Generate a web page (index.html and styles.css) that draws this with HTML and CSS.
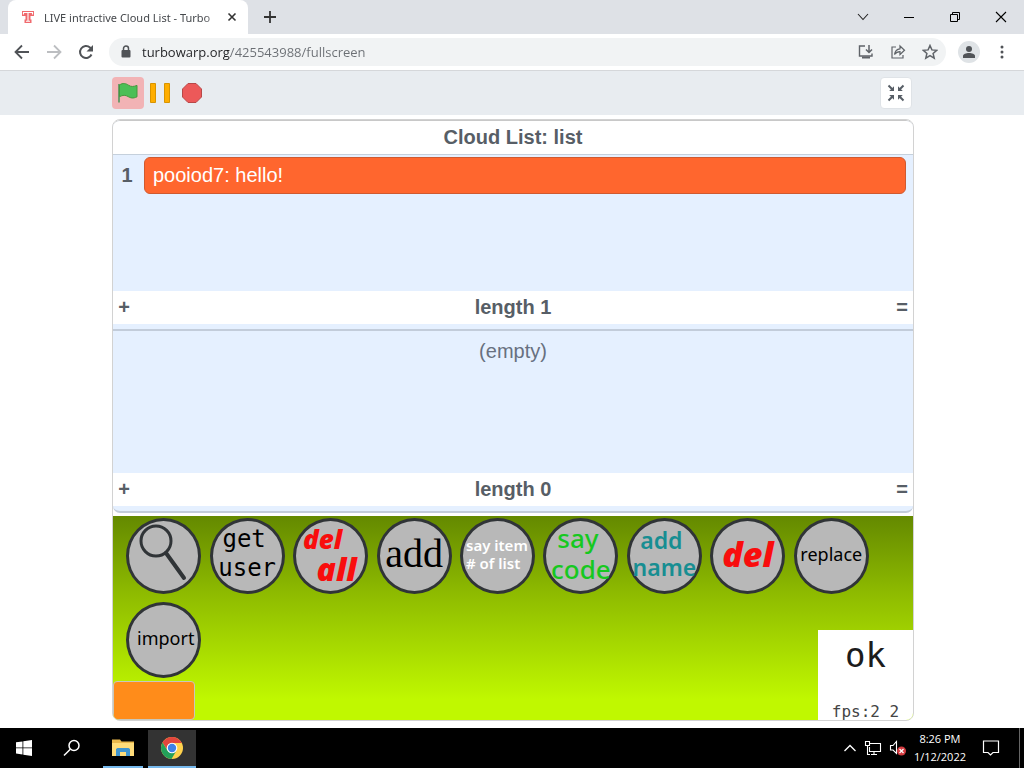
FILE: index.html
```html
<!DOCTYPE html>
<html lang="en">
<head>
<meta charset="utf-8">
<meta name="viewport" content="width=device-width, initial-scale=1">
<title>LIVE intractive Cloud List - TurboWarp</title>
<link rel="stylesheet" href="styles.css">
</head>
<body>
<header class="browser">
  <div class="tabstrip">
    <div class="tab">
      <svg class="favicon" viewBox="0 0 14 14" aria-hidden="true"><path d="M1 1h12v5h-3.500v3.500h1v3.500h-7V9.500h1V6H1z" fill="#f06a6e"/><path d="M2.500 4.500v-2h9v2M7 3v8.500M5 11.300h4" stroke="#fff" stroke-width="1.100" fill="none"/></svg>
      <a class="tab-title" href="#stage">LIVE intractive Cloud List - Turbo</a>
      <button class="icon-btn tab-close" aria-label="Close tab"><svg width="10" height="10" viewBox="0 0 10 10"><path d="M1.500 1.500l7 7M8.500 1.500l-7 7" stroke="#333" stroke-width="1.600"/></svg></button>
    </div>
    <button class="icon-btn new-tab" aria-label="New tab"><svg width="12" height="12" viewBox="0 0 12 12"><path d="M6 0v12M0 6h12" stroke="#333" stroke-width="1.800"/></svg></button>
    <div class="window-controls">
      <button class="icon-btn" aria-label="Search tabs"><svg width="12" height="12" viewBox="0 0 12 12"><path d="M1 3l5 5.500L11 3" fill="none" stroke="#222" stroke-width="1.100"/></svg></button>
      <button class="icon-btn" aria-label="Minimize"><svg width="12" height="12" viewBox="0 0 12 12"><path d="M1 6.500h10" stroke="#000"/></svg></button>
      <button class="icon-btn" aria-label="Restore"><svg width="12" height="12" viewBox="0 0 12 12"><path d="M1.500 3.500h7v7h-7zM3.500 3V1.500h7v7H9" fill="none" stroke="#000"/></svg></button>
      <button class="icon-btn" aria-label="Close window"><svg width="12" height="12" viewBox="0 0 12 12"><path d="M1 1l10 10M11 1L1 11" stroke="#000" stroke-width="1.100"/></svg></button>
    </div>
  </div>
  <div class="toolbar">
    <div class="nav">
      <button class="icon-btn" aria-label="Back"><svg width="16" height="16" viewBox="0 0 16 16"><path d="M15 8H2M8 1.500L1.500 8 8 14.500" fill="none" stroke="#505357" stroke-width="1.800"/></svg></button>
      <button class="icon-btn" aria-label="Forward"><svg width="16" height="16" viewBox="0 0 16 16"><path d="M1 8h13M8 1.500L14.500 8 8 14.500" fill="none" stroke="#bcbec1" stroke-width="1.800"/></svg></button>
      <button class="icon-btn" aria-label="Reload"><svg width="16" height="16" viewBox="0 0 16 16"><path d="M13.500 10.500A6 6 0 1 1 12 3.500L14 5.500" fill="none" stroke="#505357" stroke-width="2"/><path d="M15 1v6.500H8.500z" fill="#505357"/></svg></button>
    </div>
    <form class="omnibox">
      <svg width="10" height="14" viewBox="0 0 10 14" aria-hidden="true"><path d="M2.500 6V3.500a2.500 2.500 0 0 1 5 0V6" fill="none" stroke="#505357" stroke-width="1.500"/><rect x="0.500" y="5" width="9" height="7.500" rx="1" fill="#505357"/></svg>
      <input class="url" type="text" aria-label="Address" value="turbowarp.org/425543988/fullscreen">
      <button type="button" class="icon-btn" aria-label="Install"><svg width="16" height="16" viewBox="0 0 16 16"><path d="M7 2H1.500v10H14V9.500" fill="none" stroke="#5f6368" stroke-width="1.400"/><path d="M4 13.500h8" stroke="#5f6368" stroke-width="2"/><path d="M11 1v7M8 5.500l3 3 3-3" fill="none" stroke="#5f6368" stroke-width="1.500"/></svg></button>
      <button type="button" class="icon-btn" aria-label="Share"><svg width="16" height="16" viewBox="0 0 16 16"><path d="M6 3H2v11h11v-3" fill="none" stroke="#5f6368" stroke-width="1.200"/><path d="M4.500 10.500C5 7 7 5 10 4.800V2l4.500 4.200L10 10.500V7.600C7.500 7.600 6 8.500 4.500 10.500z" fill="none" stroke="#5f6368" stroke-width="1.200"/></svg></button>
      <button type="button" class="icon-btn" aria-label="Bookmark"><svg width="16" height="16" viewBox="0 0 16 16"><path d="M8 1.500l1.900 4.400 4.800.4-3.600 3.200 1.100 4.700L8 11.700l-4.200 2.500 1.100-4.700L1.300 6.300l4.800-.4z" fill="none" stroke="#5f6368" stroke-width="1.500"/></svg></button>
    </form>
    <button class="icon-btn avatar" aria-label="Profile"><svg width="14" height="14" viewBox="0 0 14 14"><circle cx="7" cy="4" r="3" fill="#505357"/><path d="M1 13v-2c0-4 12-4 12 0v2z" fill="#505357"/></svg></button>
    <button class="icon-btn menu" aria-label="Menu"><svg width="4" height="14" viewBox="0 0 4 14"><g fill="#505357"><circle cx="2" cy="2" r="1.500"/><circle cx="2" cy="7" r="1.500"/><circle cx="2" cy="12" r="1.500"/></g></svg></button>
  </div>
</header>

<main class="page">
  <div class="controls">
    <button class="control flag" aria-label="Go"><svg width="22" height="22" viewBox="0 0 22 22"><path d="M2 2v18.500" stroke="#4f9159" stroke-width="1.600"/><path d="M2.500 3C6 .5 9 1.500 11.500 3.200s5 1.600 8.500.2v11.400c-4 2-6.500 1.200-9-.3s-5-1.700-8.500.2z" fill="#4cbf56" stroke="#45993d"/></svg></button>
    <button class="control" aria-label="Pause"><svg width="22" height="22" viewBox="0 0 22 22"><path d="M1.500 1.500h5v19h-5zM15.500 1.500h5v19h-5z" fill="#ffae00" stroke="#d89400"/></svg></button>
    <button class="control" aria-label="Stop"><svg width="22" height="22" viewBox="0 0 22 22"><path d="M7 1.500h8L20.500 7v8L15 20.500H7L1.500 15V7z" fill="#ec5959" stroke="#b84848"/></svg></button>
    <button class="control shrink" aria-label="Exit full screen"><svg width="18" height="18" viewBox="0 0 18 18"><path d="M1.500 1.500L5.500 5.500M16.500 1.500L12.500 5.500M1.500 16.500L5.500 12.500M16.500 16.500L12.500 12.500" stroke="#575e66" stroke-width="2"/><path d="M7 2.200V7H2.200zM11 2.200V7h4.800zM7 15.800V11H2.200zM11 15.800V11h4.800z" fill="#575e66"/></svg></button>
  </div>

  <div class="stage-area">
    <section class="stage" id="stage">
      <section class="list list-first">
        <h2 class="list-title">Cloud List: list</h2>
        <ol class="list-body">
          <li class="row"><span class="index">1</span><span class="value">pooiod7: hello!</span></li>
        </ol>
        <footer class="list-foot"><button class="foot-btn" aria-label="Add item">+</button><span>length 1</span><button class="foot-btn end" aria-label="Resize list">=</button></footer>
      </section>
      <section class="list list-second">
        <div class="list-body empty">(empty)</div>
        <footer class="list-foot"><button class="foot-btn" aria-label="Add item">+</button><span>length 0</span><button class="foot-btn end" aria-label="Resize list">=</button></footer>
      </section>
      <div class="actions">
        <button class="round" aria-label="Search"><svg width="69" height="69" viewBox="0 0 69 69"><circle cx="27" cy="21" r="15" fill="none" stroke="#303437" stroke-width="3"/><path d="M37 33l18 25" stroke="#303437" stroke-width="4" stroke-linecap="round"/></svg></button>
        <button class="round pixel"><span class="to-left">get</span><span>user</span></button>
        <button class="round marker"><span class="del-word">del</span><span class="all-word">all</span></button>
        <button class="round curly">add</button>
        <button class="round small-white"><span>say item</span><span># of list</span></button>
        <button class="round sans green"><span class="to-left">say</span><span>code</span></button>
        <button class="round sans teal"><span class="to-left">add</span><span>name</span></button>
        <button class="round marker big">del</button>
        <button class="round plain">replace</button>
        <button class="round plain import">import</button>
      </div>
      <div class="swatch"></div>
      <div class="status"><span class="ok">ok</span><span class="fps">fps:2 2</span></div>
    </section>
  </div>
</main>

<footer class="taskbar">
  <button class="task" aria-label="Start"><svg width="16" height="16" viewBox="0 0 16 16"><path d="M0 2.300L6.500 1.400V7.500H0zM7.300 1.300L16 0v7.500H7.300zM0 8.300h6.500v6.200L0 13.600zM7.300 8.300H16V16l-8.700-1.300z" fill="#fff"/></svg></button>
  <button class="task" aria-label="Search"><svg width="18" height="18" viewBox="0 0 18 18"><circle cx="11" cy="6.500" r="5" fill="none" stroke="#fff" stroke-width="1.500"/><path d="M7.300 10.200L1 16.500" stroke="#fff" stroke-width="1.500"/></svg></button>
  <button class="task open explorer" aria-label="File Explorer"><svg width="22" height="20" viewBox="0 0 22 20"><path d="M0 1.500h8l1.500 2H22V18H0z" fill="#e9b84c"/><path d="M0 5h22v13H0z" fill="#ffdc79"/><path d="M4 18v-7l1.500-1h11l1.500 1v7h-4v-4H8v4z" fill="#4095cf"/></svg></button>
  <button class="task open active" aria-label="Chrome"><svg width="24" height="24" viewBox="0 0 24 24"><circle cx="12" cy="12" r="11" fill="#ffd24d"/><path d="M2.500 6.500A11 11 0 0 1 21.500 6.500L22 7H12L7.700 14.500z" fill="#e2463d"/><path d="M2.500 6.500A11 11 0 0 0 11.500 23l5-8.500H7.500z" fill="#23a15a"/><circle cx="12" cy="12" r="5.300" fill="#fff"/><circle cx="12" cy="12" r="4.200" fill="#3e82e8"/></svg></button>
  <div class="tray">
    <svg width="14" height="12" viewBox="0 0 14 12" aria-hidden="true"><path d="M1.500 9L7 3.500 12.500 9" fill="none" stroke="#fff" stroke-width="1.300"/></svg>
    <svg width="18" height="16" viewBox="0 0 18 16" aria-hidden="true"><path d="M6 3.500h10.500v8H5.500V7M10 12v2.500M7 14.500h6M1.500 1.500h4v4h-4zM3.500 6v8.500H6" fill="none" stroke="#fff" stroke-width="1.100"/></svg>
    <svg width="18" height="16" viewBox="0 0 18 16" aria-hidden="true"><path d="M1.500 5.500H4l3.500-4v12L4 10H1.500z" fill="none" stroke="#fff" stroke-width="1.100"/><circle cx="12.500" cy="11" r="4.500" fill="#d33a3f"/><path d="M10.500 9l4 4M14.500 9l-4 4" stroke="#fff" stroke-width="1.200"/></svg>
    <time class="clock" datetime="2022-01-12T20:26"><span>8:26 PM</span><span>1/12/2022</span></time>
    <svg class="notice" width="18" height="18" viewBox="0 0 18 18" aria-hidden="true"><path d="M1.500 2h15v11.500H11L8.500 16 6 13.500H1.500z" fill="none" stroke="#fff" stroke-width="1.200"/></svg>
  </div>
</footer>
</body>
</html>
```
FILE: styles.css
```css
* { box-sizing: border-box; }

body {
  margin: 0;
  min-height: 100vh;
  display: flex;
  flex-direction: column;
  background: #fff;
  font-family: "Open Sans", "Noto Sans", sans-serif;
  color: #333;
}

button {
  margin: 0;
  padding: 0;
  border: 0;
  background: none;
  font: inherit;
  color: inherit;
}

svg { display: block; flex: none; }

.icon-btn {
  display: flex;
  align-items: center;
  justify-content: center;
  flex: none;
}

/* Browser frame */
.tabstrip {
  display: flex;
  align-items: center;
  height: 34px;
  padding-left: 8px;
  background: #dee1e6;
}

.tab {
  display: flex;
  align-items: center;
  align-self: stretch;
  width: 240px;
  padding: 0 10px 0 13px;
  background: #fff;
  border-radius: 8px 8px 0 0;
}

.favicon { width: 14px; height: 14px; margin-right: 9px; }

.tab-title {
  flex: 1;
  min-width: 0;
  overflow: hidden;
  white-space: nowrap;
  font-family: "Noto Sans", "Open Sans", sans-serif;
  font-size: 11px;
  color: #45484c;
  text-decoration: none;
  -webkit-mask-image: linear-gradient(90deg, #000 88%, transparent 104%);
  mask-image: linear-gradient(90deg, #000 88%, transparent 104%);
}

.tab-close { width: 12px; height: 16px; margin-left: 2px; }
.new-tab { width: 44px; height: 34px; }

.window-controls { display: flex; margin-left: auto; }
.window-controls .icon-btn { width: 46px; height: 28px; }

.toolbar {
  display: flex;
  align-items: center;
  height: 37px;
  padding: 0 14px;
  border-bottom: 1px solid #d5d7da;
  background: #fff;
}

.nav { display: flex; gap: 16px; margin-right: 15px; }

.omnibox {
  display: flex;
  align-items: center;
  flex: 1;
  gap: 16px;
  height: 28px;
  padding: 0 8px 0 12px;
  border-radius: 14px;
  background: #f1f3f4;
}

.url {
  flex: 1;
  min-width: 0;
  margin-left: -5px;
  padding: 0;
  border: 0;
  outline: 0;
  font-family: "Open Sans", "Noto Sans", sans-serif;
  font-size: 13px;
  color: #5f6368;
  background: linear-gradient(90deg, #202124 88px, #6b6f74 88px);
  -webkit-background-clip: text;
  background-clip: text;
  -webkit-text-fill-color: transparent;
}

.avatar {
  width: 22px;
  height: 22px;
  margin: 0 18px 0 12px;
  border-radius: 50%;
  background: #dfe3e6;
}

.menu { width: 8px; margin-right: 4px; }

/* Player page */
.page { flex: 1; }

.controls {
  display: flex;
  align-items: center;
  height: 44px;
  padding: 0 112px;
  background: #e8ecf0;
}

.control {
  display: flex;
  align-items: center;
  justify-content: center;
  width: 32px;
  height: 32px;
  border-radius: 4px;
}

.flag { background: #f2b3b5; }

.shrink {
  margin-left: auto;
  border: 1px solid #dfe3e7;
  background: #fff;
}

.stage-area { padding: 4px 110px 7px 112px; }

.stage {
  position: relative;
  overflow: hidden;
  border: 1px solid #d2d2d2;
  border-radius: 8px;
  background: #fff;
}

.list {
  display: flex;
  flex-direction: column;
  overflow: hidden;
  border: 1px solid #c2ccda;
  border-width: 1px 0 2px;
  border-radius: 7px;
  padding-bottom: 5px;
  background: #e5f0ff;
  font-family: "Liberation Sans", Arial, sans-serif;
  font-size: 20px;
  line-height: 33px;
  text-align: center;
  color: #575e75;
}

.list-first { border-top-color: #c8c8c8; border-radius: 7px 7px 0 0; }
.list-second { border-top: 0; border-radius: 0 0 7px 7px; }

.list-title {
  margin: 0;
  border-bottom: 1px solid #c5d0dc;
  background: #fff;
  font-size: 20px;
  line-height: 33px;
  color: #575e66;
}

.list-body {
  height: 136px;
  margin: 0;
  padding: 2px 7px 0 0;
  list-style: none;
}

.empty {
  height: 142px;
  padding: 4px 0 0;
  color: #687080;
}

.row { display: flex; align-items: center; }

.index {
  width: 31px;
  padding-right: 3px;
  font-weight: bold;
  color: #575e66;
}

.value {
  flex: 1;
  height: 37px;
  padding-left: 8px;
  border: 1px solid #cf5a30;
  border-radius: 6px;
  background: #ff662e;
  line-height: 35px;
  text-align: left;
  color: #fff;
}

.list-foot {
  display: flex;
  justify-content: space-between;
  background: #fff;
  font-weight: bold;
  color: #575e66;
}

.foot-btn { width: 22px; }

.actions {
  display: grid;
  grid-template-columns: repeat(9, 1fr);
  row-gap: 8px;
  justify-items: center;
  margin-top: 3px;
  padding: 2px 40px 42px 9px;
  background: linear-gradient(#648900, #8ebb00 38%, #c0f800 90%);
}

.round {
  display: flex;
  flex-direction: column;
  align-items: center;
  justify-content: center;
  width: 75px;
  height: 76px;
  padding-bottom: 4px;
  border: 3px solid #303437;
  border-radius: 50%;
  background: #b8b8b8;
  white-space: nowrap;
  color: #000;
}

.to-left { padding-right: 6px; }

.pixel {
  font-family: "DejaVu Sans Mono", monospace;
  font-size: 24px;
  line-height: 29px;
}

.marker {
  font-family: "Open Sans", sans-serif;
  font-size: 26px;
  font-weight: 800;
  font-style: italic;
  line-height: 30px;
  color: #f90d0d;
}

.big { font-size: 34px; }
.del-word { padding-right: 16px; }
.all-word { padding-left: 12px; font-size: 32px; }

.curly {
  font-family: "Liberation Serif", serif;
  font-size: 40px;
  line-height: 40px;
}

.small-white {
  align-items: flex-start;
  padding-left: 3px;
  font-family: "Noto Sans", sans-serif;
  font-size: 15px;
  font-weight: 600;
  line-height: 18px;
  color: #fff;
}

.sans {
  font-family: "Noto Sans", sans-serif;
  font-size: 26px;
  font-weight: 500;
  line-height: 31px;
}

.green { color: #16c820; }
.teal { font-size: 23px; font-weight: 600; line-height: 27px; color: #178e92; }

.plain {
  font-family: "Noto Sans", sans-serif;
  font-size: 18px;
}

.import { padding-left: 4px; }

.swatch {
  position: absolute;
  left: 0;
  bottom: 0;
  width: 82px;
  height: 39px;
  border: 1px solid #c8c8bc;
  border-radius: 4px;
  background: #ff8c1a;
}

.status {
  position: absolute;
  right: 0;
  bottom: 0;
  display: flex;
  flex-direction: column;
  align-items: center;
  width: 95px;
  height: 90px;
  overflow: hidden;
  background: #fff;
  font-family: "DejaVu Sans Mono", monospace;
  color: #1c1c1c;
}

.ok { font-size: 34px; line-height: 50px; }
.fps { padding-top: 16px; font-size: 16px; line-height: 32px; color: #444; }

/* Taskbar */
.taskbar {
  display: flex;
  height: 40px;
  background: #000;
  color: #fff;
}

.task {
  display: flex;
  align-items: center;
  justify-content: center;
  width: 48px;
  border: solid transparent;
  border-width: 2px 0;
}

.open { border-bottom-color: #76b9ed; }
.explorer { width: 40px; margin: 0 5px 0 7px; }
.active { background: #333 padding-box; }

.tray {
  display: flex;
  align-items: center;
  gap: 7px;
  margin-left: auto;
  padding-right: 4px;
}

.tray::after {
  content: "";
  align-self: stretch;
  width: 1px;
  margin-left: 12px;
  background: #666;
}

.clock {
  display: flex;
  flex-direction: column;
  align-items: center;
  font-size: 11px;
  line-height: 18px;
}

.notice { margin-left: 9px; }
```
